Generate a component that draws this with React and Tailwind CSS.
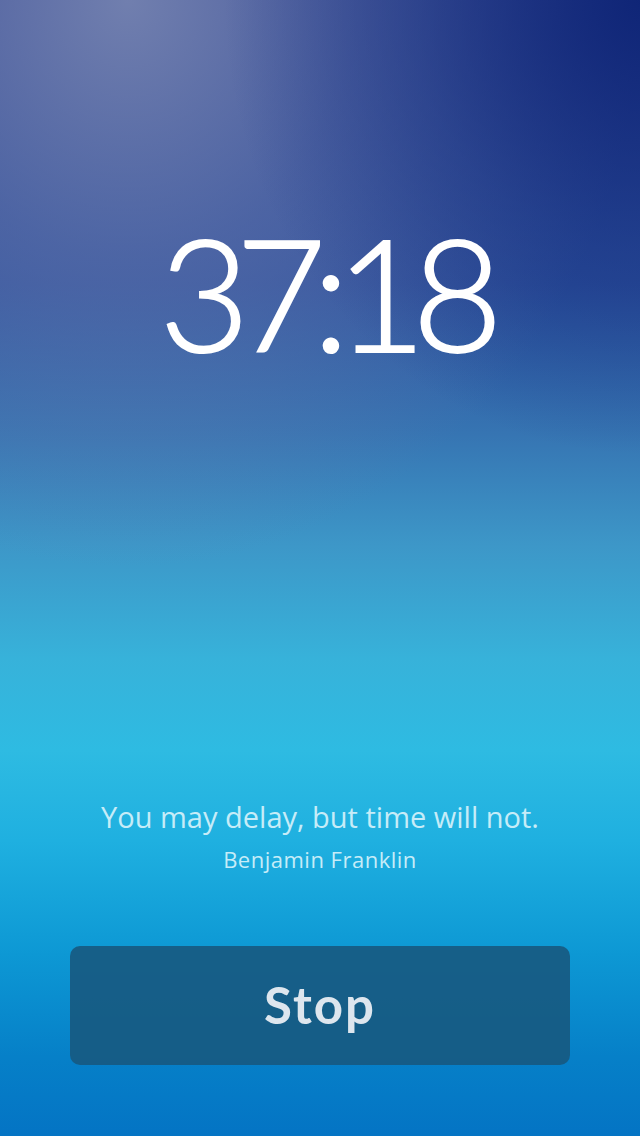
export default function App() {
  return (
    <div className="relative h-[1136px] w-full overflow-hidden bg-[linear-gradient(to_bottom,#2a3f8e_0%,#2b4f9c_25%,#3674b2_38%,#3d97c8_48%,#37b2da_58%,#2ebbe2_66%,#1fb0e0_74%,#0d98d4_84%,#0680c8_93%,#0474c4_100%)] font-['Lato',sans-serif]">
      <div className="absolute inset-0 bg-[radial-gradient(ellipse_80%_50%_at_20%_0%,rgba(125,138,180,0.85)_0%,rgba(110,125,175,0.5)_45%,rgba(100,120,180,0)_100%)]" />
      <div className="absolute inset-0 bg-[radial-gradient(ellipse_65%_40%_at_100%_0%,rgba(14,36,118,0.95)_0%,rgba(20,45,125,0.45)_55%,rgba(20,45,125,0)_100%)]" />
      <div className="relative flex h-full flex-col items-center">
        <div className="mt-[214px] pl-[8px] text-[156px] leading-none font-light tracking-[-14px] text-white [-webkit-text-stroke:2px_white]">37:18</div>
        <div className="mt-auto flex flex-col items-center font-['Open_Sans',sans-serif]">
          <p className="text-[29px] leading-none text-[#c6ecf8]">You may delay, but time will not.</p>
          <p className="mt-[17px] text-[22px] leading-none tracking-[0.5px] text-[#c6ecf8]">Benjamin Franklin</p>
        </div>
        <button className="mt-[76px] mb-[71px] flex h-[119px] w-[500px] items-center justify-center rounded-[10px] bg-[#17597f]/90 text-[51px] font-bold tracking-[2px] text-[#dde6ee]">
          Stop
        </button>
      </div>
    </div>
  );
}
